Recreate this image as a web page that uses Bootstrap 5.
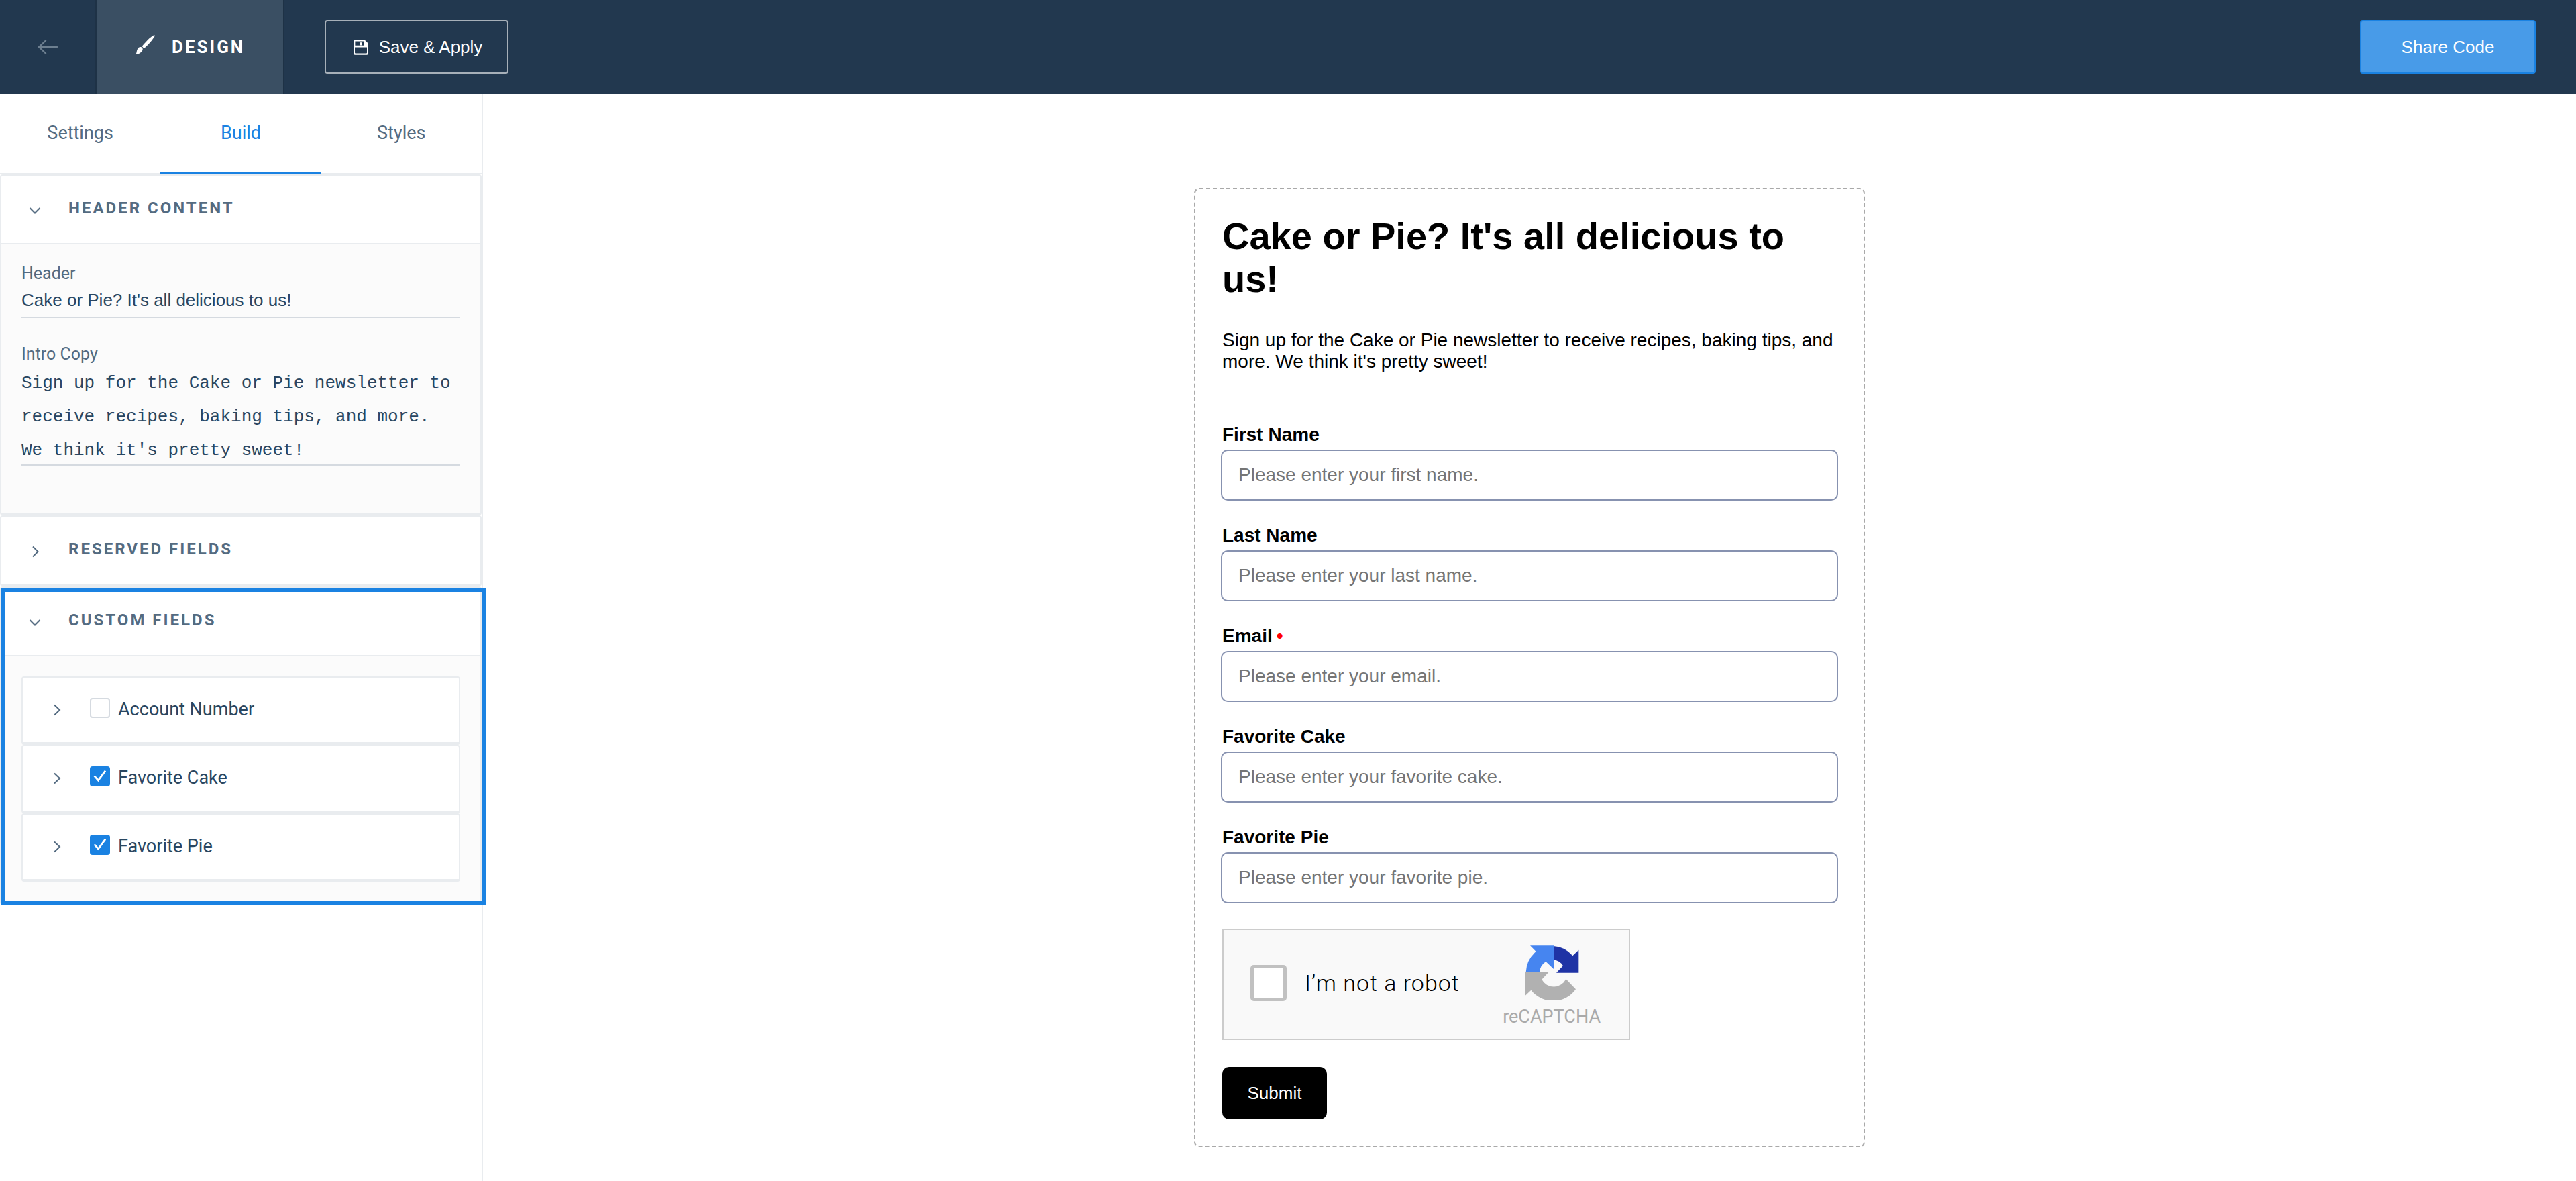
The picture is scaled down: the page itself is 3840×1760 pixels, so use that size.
<!DOCTYPE html>
<html lang="en">
<head>
<meta charset="utf-8">
<meta name="viewport" content="width=device-width, initial-scale=1">
<title>Form Designer</title>
<link href="https://cdn.jsdelivr.net/npm/bootstrap@5.3.0/dist/css/bootstrap.min.css" rel="stylesheet">
<style>
  :root {
    --ink: #294661;
    --slate: #546b81;
    --line: #e9ecef;
    --accent: #1a82e2;
    --ui: Roboto, "Open Sans", sans-serif;
    --arial: "Liberation Sans", Arial, sans-serif;
  }
  body { font-family: var(--ui); font-size: 27px; background: #fff; color: var(--ink); }

  /* top bar */
  .topbar { height: 140px; background: #22384f; }
  .topbar .cell { border-right: 2px solid #1e3246; color: #fff; text-decoration: none; }
  .cell-back { width: 144px; }
  .cell-design { width: 280px; padding-left: 58px; gap: 25px; background: #3a4f63; font-size: 26px; font-weight: 700; letter-spacing: 3px; }
  .cell-design svg { margin-bottom: 7px; }
  .top-btn { height: 80px; font-family: var(--arial); font-size: 26px; border-radius: 4px; border-width: 2px; color: #fff; }
  .btn-save { width: 274px; margin-left: 60px; padding: 0 8px 0 12px; gap: 16px; border-color: #a7b0b9; }
  .btn-share { width: 262px; margin-right: 60px; background: #489be8; border-color: var(--accent); }

  /* sidebar */
  .side { flex: 0 0 720px; border-right: 2px solid var(--line); }
  .side .tabs { height: 120px; border-bottom: 2px solid var(--line); }
  .tabs .nav-link { flex: 1 1 0; height: 120px; padding: 0 0 0; color: var(--slate); border-radius: 0; border-bottom: 4px solid transparent; }
  .tabs .nav-link.active { color: var(--accent); background: none; border-bottom-color: var(--accent); }
  .fold { border: 2px solid var(--line); border-bottom-width: 4px; border-radius: 4px; background: #fff; }
  .fold-head { height: 100px; padding: 0 0 4px 40px; gap: 40px; border: 0; background: none; color: var(--slate);
    font-size: 24px; font-weight: 700; letter-spacing: 3px; }
  .fold-head svg { width: 20px; margin-top: 7px; }
  .fold-body { background: #fbfbfb; border-top: 2px solid var(--line); padding: 30px; }
  .fold-body.tall { padding-bottom: 70px; }
  .side-label { display: block; font-size: 25px; line-height: 28px; color: var(--slate); }
  .line-input { display: block; width: 100%; padding: 0; border: 0; border-bottom: 2px solid #d5dae0; background: none; color: var(--ink); outline: 0; }
  .line-text { height: 52px; font: 26px var(--arial); margin-bottom: 40px; }
  .line-area { height: 148px; margin-top: 4px; font: 26px/50px "Liberation Mono", monospace; resize: none; overflow: hidden; }
  .item { height: 102px; padding: 0 0 2px 44px; }
  .item-toggle { border: 0; background: none; padding: 0; width: 20px; margin-top: 2px; }
  .item .form-check-input { width: 30px; height: 30px; margin: 0 12px 4px 36px; border: 2px solid #d5dae0; border-radius: 4px; }
  .item .form-check-input:checked { background-color: var(--accent); border-color: var(--accent); background-size: 30px 30px;
    background-image: url("data:image/svg+xml,%3csvg xmlns='http://www.w3.org/2000/svg' viewBox='0 0 20 20'%3e%3cpath fill='none' stroke='%23fff' stroke-width='1.8' d='M4.4 9.6 8.3 14 15.4 4.4'/%3e%3c/svg%3e"); }
  .item label { line-height: 30px; }
  .marked { position: relative; }
  .marked::after { content: ""; position: absolute; inset: 0 -8px -5px -1px; border: 6px solid var(--accent); pointer-events: none; }

  /* form preview */
  .stage { padding-top: 140px; }
  .preview { max-width: 1000px; padding: 38px 40px 40px; border: 2px dashed #a9a9a9; border-radius: 8px; font-family: var(--arial); font-size: 28px; line-height: 32px; color: #000; }
  .preview h1 { font-size: 56px; line-height: 64px; font-weight: 700; margin-bottom: 43px; }
  .preview .intro { margin-bottom: 77px; }
  .field { margin-bottom: 36px; }
  .field label { display: block; font-weight: 700; margin-bottom: 6px; }
  .field .form-control { width: auto; min-width: calc(100% + 4px); height: 76px; margin: 0 -2px; padding: 0 24px; border: 2px solid #8792b0; border-radius: 10px; font-size: 28px; }
  .field .form-control::placeholder { color: #757575; }
  .req { color: #f00; margin-left: 6px; }
  .captcha { width: 608px; height: 166px; margin: 38px 0 40px; padding: 0 42px 0 40px; border: 2px solid #ccc; background: #f9f9f9; font-family: var(--ui); }
  .captcha .form-check-input { width: 54px; height: 54px; margin: 0 27px 4px 0; border: 5px solid #c1c1c1; border-radius: 5px; }
  .captcha label { font-size: 34px; line-height: 40px; font-weight: 300; margin-bottom: 4px; letter-spacing: 1px; }
  .captcha-logo { padding-top: 5px; font-size: 27px; line-height: 32px; color: #aaa; }
  .captcha-logo svg { margin-bottom: 8px; }
  .btn-submit { width: 156px; height: 78px; padding: 0; background: #000; color: #fff; border: 0; border-radius: 10px; font-size: 26px; }
</style>
<script src="https://cdn.jsdelivr.net/npm/bootstrap@5.3.0/dist/js/bootstrap.bundle.min.js"></script>
</head>
<body>
<div class="d-flex flex-column min-vh-100">
  <header class="topbar d-flex align-items-center">
    <a href="#" class="cell cell-back h-100 d-flex align-items-center justify-content-center" aria-label="Back">
      <svg width="30" height="22" viewBox="0 0 30 22" fill="none" stroke="#6d7f90" stroke-width="2.4" stroke-linecap="round" stroke-linejoin="round"><path d="M29 11H2M12 1.500 2 11l10 9.500"/></svg>
    </a>
    <a href="#" class="cell cell-design h-100 d-flex align-items-center">
      <svg width="29" height="29" viewBox="0 0 87 87" fill="#fff"><path d="M84 1c3 1 2 4 1 6C76 23 56 46 38 61l-9-10C43 34 64 10 80 2c1-1 3-1 4-1z"/><path d="M24 54c5 1 9 6 8 11C30 77 15 86 1 87 6 80 4 72 9 63c3-6 9-10 15-9z"/></svg>
      <span>DESIGN</span>
    </a>
    <button type="button" class="btn top-btn btn-save d-flex align-items-center justify-content-center">
      <svg width="22" height="23" viewBox="0 0 66 68"><path fill="#fff" fill-rule="evenodd" d="M6 0h43l17 17v45q0 6-6 6H6q-6 0-6-6V6q0-6 6-6zM7 7v19h38V7zM6 34v24q0 3 3 3h48q3 0 3-3V34z"/><path fill="#fff" d="M29 12h8v13h-8z"/></svg>
      <span>Save &amp; Apply</span>
    </button>
    <button type="button" class="btn top-btn btn-share ms-auto">Share Code</button>
  </header>

  <div class="d-flex flex-grow-1">
    <aside class="side">
      <nav class="tabs nav flex-nowrap">
        <a class="nav-link d-flex align-items-center justify-content-center" href="#">Settings</a>
        <a class="nav-link d-flex align-items-center justify-content-center active" href="#" aria-current="page">Build</a>
        <a class="nav-link d-flex align-items-center justify-content-center" href="#">Styles</a>
      </nav>

      <section class="fold">
        <button type="button" class="fold-head w-100 d-flex align-items-center" aria-expanded="true">
          <svg height="12" viewBox="0 0 20 12" fill="none" stroke="currentColor" stroke-width="2"><path d="M2.500 2 10 9.500 17.500 2"/></svg>
          <span>HEADER CONTENT</span>
        </button>
        <div class="fold-body tall">
          <label class="side-label" for="hdr">Header</label>
          <input class="line-input line-text" id="hdr" type="text" value="Cake or Pie? It's all delicious to us!">
          <label class="side-label" for="copy">Intro Copy</label>
          <textarea class="line-input line-area" id="copy" rows="3">Sign up for the Cake or Pie newsletter to receive recipes, baking tips, and more. We think it's pretty sweet!</textarea>
        </div>
      </section>

      <section class="fold">
        <button type="button" class="fold-head w-100 d-flex align-items-center" aria-expanded="false">
          <svg height="18" viewBox="0 0 20 18" fill="none" stroke="currentColor" stroke-width="2"><path d="M7 1.500 14.500 9 7 16.500"/></svg>
          <span>RESERVED FIELDS</span>
        </button>
      </section>

      <section class="fold marked">
        <button type="button" class="fold-head w-100 d-flex align-items-center" aria-expanded="true">
          <svg height="12" viewBox="0 0 20 12" fill="none" stroke="currentColor" stroke-width="2"><path d="M2.500 2 10 9.500 17.500 2"/></svg>
          <span>CUSTOM FIELDS</span>
        </button>
        <div class="fold-body">
          <div class="fold item d-flex align-items-center">
            <button type="button" class="item-toggle d-flex" aria-label="Expand Account Number"><svg width="20" height="18" viewBox="0 0 20 18" fill="none" stroke="#546b81" stroke-width="2"><path d="M3 1.500 11 9 3 16.500"/></svg></button>
            <input class="form-check-input" type="checkbox" id="f1">
            <label for="f1">Account Number</label>
          </div>
          <div class="fold item d-flex align-items-center">
            <button type="button" class="item-toggle d-flex" aria-label="Expand Favorite Cake"><svg width="20" height="18" viewBox="0 0 20 18" fill="none" stroke="#546b81" stroke-width="2"><path d="M3 1.500 11 9 3 16.500"/></svg></button>
            <input class="form-check-input" type="checkbox" id="f2" checked>
            <label for="f2">Favorite Cake</label>
          </div>
          <div class="fold item d-flex align-items-center">
            <button type="button" class="item-toggle d-flex" aria-label="Expand Favorite Pie"><svg width="20" height="18" viewBox="0 0 20 18" fill="none" stroke="#546b81" stroke-width="2"><path d="M3 1.500 11 9 3 16.500"/></svg></button>
            <input class="form-check-input" type="checkbox" id="f3" checked>
            <label for="f3">Favorite Pie</label>
          </div>
        </div>
      </section>
    </aside>

    <main class="stage flex-grow-1">
      <form class="preview mx-auto">
        <h1>Cake or Pie? It's all delicious to us!</h1>
        <p class="intro">Sign up for the Cake or Pie newsletter to receive recipes, baking tips, and more. We think it's pretty sweet!</p>
        <div class="field">
          <label for="first">First Name</label>
          <input class="form-control" id="first" type="text" placeholder="Please enter your first name.">
        </div>
        <div class="field">
          <label for="last">Last Name</label>
          <input class="form-control" id="last" type="text" placeholder="Please enter your last name.">
        </div>
        <div class="field">
          <label for="email">Email<span class="req">•</span></label>
          <input class="form-control" id="email" type="email" placeholder="Please enter your email.">
        </div>
        <div class="field">
          <label for="cake">Favorite Cake</label>
          <input class="form-control" id="cake" type="text" placeholder="Please enter your favorite cake.">
        </div>
        <div class="field">
          <label for="pie">Favorite Pie</label>
          <input class="form-control" id="pie" type="text" placeholder="Please enter your favorite pie.">
        </div>
        <div class="captcha d-flex align-items-center">
          <input class="form-check-input" type="checkbox" id="robot">
          <label for="robot">I’m not a robot</label>
          <div class="captcha-logo ms-auto d-flex flex-column align-items-center">
            <svg width="81" height="82" viewBox="160 83 241 246" aria-hidden="true">
              <path fill="#1f33a5" d="M287 86a120 120 0 0 1 86 43l27-26v102H300l30-31a56 56 0 0 0-43-27z"/>
              <path fill="#4685f0" d="M288 84H183l26 26a130 130 0 0 0-45 92h61a62 62 0 0 1 28-47l35 33z"/>
              <path fill="#b1b1b1" d="M160 201h107l-32 34a60 60 0 0 0 108-2l44 46a124 124 0 0 1-200 4l-27 26z"/>
            </svg>
            <span>reCAPTCHA</span>
          </div>
        </div>
        <button type="submit" class="btn btn-submit">Submit</button>
      </form>
    </main>
  </div>
</div>
</body>
</html>
